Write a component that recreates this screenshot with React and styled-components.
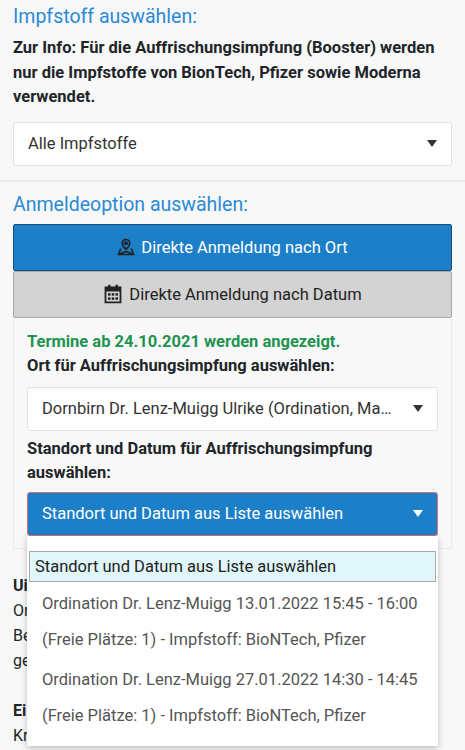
import React from "react";
import styled, { createGlobalStyle } from "styled-components";

const G = createGlobalStyle`
  body { margin:0; background:#f8f8f8; font-family: Roboto, "Noto Sans", sans-serif; color:#212529; }
`;
const Section = styled.div`
  padding: 4px 13px 14px;
  border-bottom: 2px solid #ececec;
`;
const H = styled.div`
  color:#2a8ad4; font-size:19.5px; line-height:26px; margin: ${p=>p.$top||0}px 0 6px;
`;
const Bold = styled.div`font-weight:700; font-size:16.5px; line-height:24.5px; color:${p=>p.$c||"#212529"};`;
const Select = styled.div`
  display:flex; align-items:center; justify-content:space-between;
  height:44px; box-sizing:border-box; padding:0 14px;
  background:${p=>p.$blue?"#1d7fc7":"#fff"}; color:${p=>p.$blue?"#fff":"#333"};
  border:1px solid ${p=>p.$blue?"#e06c7a":"#e2e2e2"}; border-radius:3px; font-size:16.5px;
  margin:${p=>p.$m||"0"};
  span{white-space:nowrap;overflow:hidden;text-overflow:ellipsis;}
`;
const Caret = styled.i`
  width:0;height:0;border-left:5px solid transparent;border-right:5px solid transparent;
  border-top:7px solid ${p=>p.$c||"#333"}; flex-shrink:0; margin-left:20px;
`;
const Btn = styled.div`
  height:45px; display:flex; align-items:center; justify-content:center; gap:6px;
  background:${p=>p.$blue?"#1d7fc7":"#d3d3d3"}; color:${p=>p.$blue?"#fff":"#222"};
  border:1px solid ${p=>p.$blue?"#124e80":"#aaa"}; border-radius:2px; font-size:16.5px;
`;
const Panel = styled.div`
  border:1px solid #ececec; border-top:none; padding:12px 13px 12px;
`;
const DropWrap = styled.div`position:relative; margin-top:6px;`;
const Drop = styled.div`
  position:absolute; left:0; right:0; top:100%; background:#fff;
  box-shadow:0 2px 6px rgba(0,0,0,.25); padding:15px 2px 12px; z-index:2;
`;
const Opt = styled.div`
  font-size:16.5px; color:${p=>p.$hi?"#222":"#555"}; line-height:${p=>p.$hi?"29px":"36px"};
  padding:${p=>p.$hi?"0 5px":"0 13px"}; margin-bottom:${p=>p.$gap||0}px; white-space:nowrap;
  ${p=>p.$hi&&"background:#e0f6fa;border:1px solid #aaa;margin-bottom:4px;"}
`;
const Body = styled.div`padding:24px 13px; font-size:16px; line-height:25px;`;

export default function App(){
  return <>
    <G/>
    <Section>
      <H>Impfstoff auswählen:</H>
      <Bold>Zur Info: Für die Auffrischungsimpfung (Booster) werden nur die Impfstoffe von BionTech, Pfizer sowie Moderna verwendet.</Bold>
      <Select $m="12px 0 0"><span>Alle Impfstoffe</span><Caret/></Select>
    </Section>
    <div style={{padding:"0 13px"}}>
      <H $top={10}>Anmeldeoption auswählen:</H>
      <Btn $blue>
        <svg width="18" height="18" viewBox="0 0 24 24" fill="none" stroke="#222" strokeWidth="2.2"><path d="M12 2a5 5 0 0 1 5 5c0 4-5 8-5 8s-5-4-5-8a5 5 0 0 1 5-5z"/><circle cx="12" cy="7" r="1.6" fill="#222"/><path d="M5 14l-3 8h20l-3-8M2 22l10-4 10 4"/></svg>
        Direkte Anmeldung nach Ort</Btn>
      <Btn>
        <svg width="20" height="20" viewBox="0 0 24 24" fill="#222"><path d="M3 4h18v18H3z" fill="none" stroke="#222" strokeWidth="2.2"/><rect x="3" y="4" width="18" height="5"/><rect x="6" y="1" width="3" height="5"/><rect x="15" y="1" width="3" height="5"/><rect x="6" y="11" width="3" height="3"/><rect x="10.5" y="11" width="3" height="3"/><rect x="15" y="11" width="3" height="3"/><rect x="6" y="16" width="3" height="3"/><rect x="10.5" y="16" width="3" height="3"/><rect x="15" y="16" width="3" height="3"/></svg>
        Direkte Anmeldung nach Datum</Btn>
      <Panel>
        <Bold $c="#1f9350">Termine ab 24.10.2021 werden angezeigt.</Bold>
        <Bold>Ort für Auffrischungsimpfung auswählen:</Bold>
        <Select $m="8px 0 6px"><span>Dornbirn Dr. Lenz-Muigg Ulrike (Ordination, Markt</span><Caret/></Select>
        <Bold>Standort und Datum für Auffrischungsimpfung auswählen:</Bold>
        <DropWrap>
          <Select $blue><span>Standort und Datum aus Liste auswählen</span><Caret $c="#fff"/></Select>
          <Drop>
            <Opt $hi>Standort und Datum aus Liste auswählen</Opt>
            <Opt>Ordination Dr. Lenz-Muigg 13.01.2022 15:45 - 16:00</Opt>
            <Opt $gap={4}>(Freie Plätze: 1) - Impfstoff: BioNTech, Pfizer</Opt>
            <Opt>Ordination Dr. Lenz-Muigg 27.01.2022 14:30 - 14:45</Opt>
            <Opt>(Freie Plätze: 1) - Impfstoff: BioNTech, Pfizer</Opt>
          </Drop>
        </DropWrap>
      </Panel>
    </div>
    <Body>
      <b>Ui</b><br/>Or<br/>Be<br/>ge<br/><br/><b>Ei</b><br/>Kr
    </Body>
  </>;
}
